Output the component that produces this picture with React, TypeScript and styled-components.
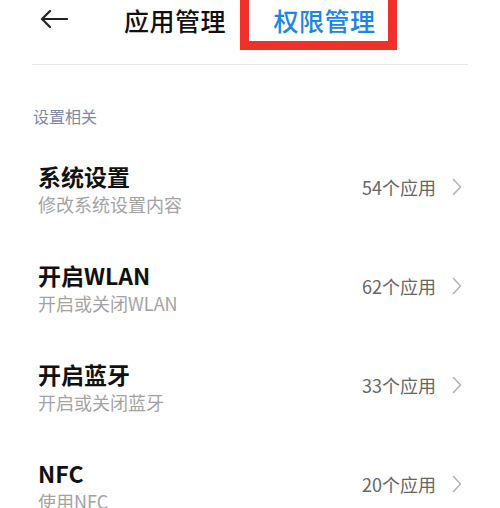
import React from "react";
import styled, { createGlobalStyle } from "styled-components";

const GlobalStyle = createGlobalStyle`
  body {
    margin: 0;
    background: #fff;
    font-family: "Noto Sans CJK SC", "Noto Sans", sans-serif;
  }
`;

const items = [
  { title: "系统设置", desc: "修改系统设置内容", count: 54 },
  { title: "开启WLAN", desc: "开启或关闭WLAN", count: 62 },
  { title: "开启蓝牙", desc: "开启或关闭蓝牙", count: 33 },
  { title: "NFC", desc: "使用NFC", count: 20 },
];

function BackArrow() {
  return (
    <svg width="28" height="18" viewBox="0 0 28 18" fill="none">
      <path d="M27 9H2M10 1L2 9l8 8" stroke="#222" strokeWidth="2.2" strokeLinecap="round" strokeLinejoin="round" />
    </svg>
  );
}

function Chevron() {
  return (
    <svg width="10" height="18" viewBox="0 0 10 18" fill="none">
      <path d="M1.5 1.5L8.5 9l-7 7.5" stroke="#b3b3b3" strokeWidth="1.6" strokeLinecap="round" strokeLinejoin="round" />
    </svg>
  );
}

export default function App() {
  return (
    <>
      <GlobalStyle />
      <Page>
        <Header>
          <BackButton>
            <BackArrow />
          </BackButton>
          <Tab>应用管理</Tab>
          <ActiveTab>权限管理</ActiveTab>
        </Header>
        <Divider />
        <SectionLabel>设置相关</SectionLabel>
        <List>
          {items.map((it) => (
            <Row key={it.title}>
              <Texts>
                <Title>{it.title}</Title>
                <Desc>{it.desc}</Desc>
              </Texts>
              <Right>
                <Count>{it.count}个应用</Count>
                <Chevron />
              </Right>
            </Row>
          ))}
        </List>
      </Page>
    </>
  );
}

const Page = styled.div`
  width: 500px;
  height: 508px;
  overflow: hidden;
  background: #fff;
`;

const Header = styled.div`
  height: 64px;
  display: flex;
  align-items: flex-start;
  padding-left: 40px;
  box-sizing: border-box;
`;

const BackButton = styled.div`
  width: 28px;
  height: 18px;
  margin-top: 10px;
  display: flex;
  margin-right: 56px;
`;

const Tab = styled.div`
  font-size: 25px;
  line-height: 40px;
  font-weight: 500;
  color: #111;
  letter-spacing: 0.5px;
  margin-right: 14px;
`;

const ActiveTab = styled.div`
  margin-top: -10px;
  width: 157px;
  height: 60px;
  box-sizing: border-box;
  border: 9px solid #f0302a;
  display: flex;
  align-items: center;
  justify-content: center;
  padding-left: 12px;
  font-size: 25px;
  font-weight: 500;
  color: #1b85e8;
  letter-spacing: 0.5px;
`;

const Divider = styled.div`
  height: 1px;
  margin: 0 32px;
  background: #e6e6e6;
`;

const SectionLabel = styled.div`
  margin: 41px 0 0 33px;
  font-size: 16px;
  line-height: 20px;
  color: #7d88a6;
`;

const List = styled.div`
  margin-top: 13px;
`;

const Row = styled.div`
  height: 99px;
  display: flex;
  align-items: center;
  justify-content: space-between;
  padding: 0 38px;
`;

const Texts = styled.div`
  display: flex;
  flex-direction: column;
`;

const Title = styled.div`
  font-size: 23px;
  line-height: 30px;
  font-weight: 600;
  color: #111;
`;

const Desc = styled.div`
  font-size: 18px;
  line-height: 26px;
  color: #a3a3a3;
`;

const Right = styled.div`
  display: flex;
  align-items: center;
  gap: 16px;
  margin-top: -3px;
`;

const Count = styled.div`
  font-size: 18px;
  color: #666;
`;
